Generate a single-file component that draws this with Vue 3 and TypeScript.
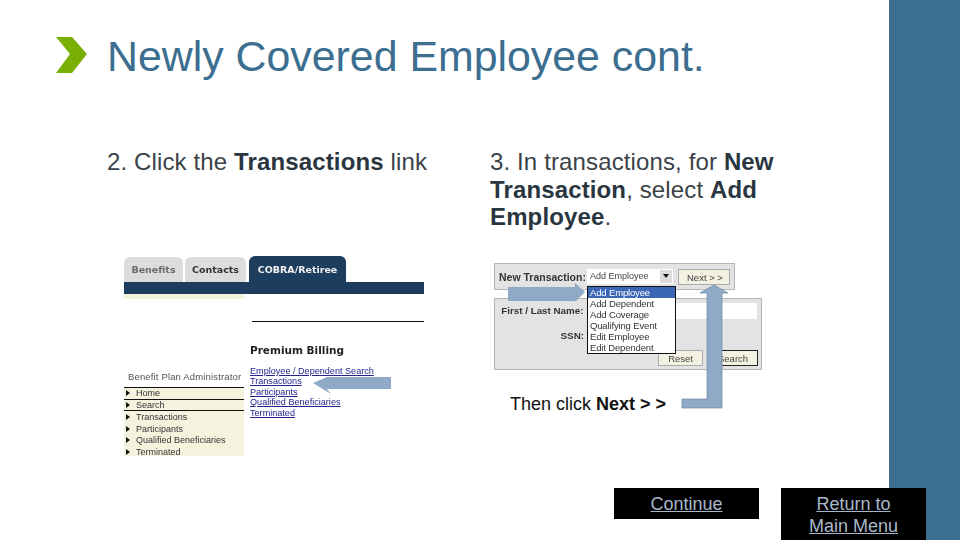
<script setup lang="ts">
const links: string[] = ['Employee / Dependent Search', 'Transactions', 'Participants', 'Qualified Beneficiaries', 'Terminated']
const menu: string[] = ['Home', 'Search', 'Transactions', 'Participants', 'Qualified Beneficiaries', 'Terminated']
const options: string[] = ['Add Employee', 'Add Dependent', 'Add Coverage', 'Qualifying Event', 'Edit Employee', 'Edit Dependent']
</script>

<template>
  <div class="slide">
    <aside class="rail"></aside>

    <header class="head">
      <svg class="chev" width="31" height="36" viewBox="0 0 31 36"><polygon points="0,0 16,0 31,17 16,36 0,36 14,17" fill="#7ab005" /></svg>
      <h1>Newly Covered Employee cont.</h1>
    </header>

    <main class="cols">
      <section class="col-left">
        <p class="lead">2. Click the <b>Transactions</b> link</p>
        <div class="shot-a">
          <div class="tabs">
            <span class="tab t1">Benefits</span>
            <span class="tab t2">Contacts</span>
            <span class="tab t3">COBRA/Retiree</span>
          </div>
          <div class="bar"></div>
          <div class="shot-body">
            <div class="nav">
              <div class="beige-top"></div>
              <div class="nav-title">Benefit Plan Administrator</div>
              <ul class="nav-list">
                <li v-for="m in menu" :key="m"><i></i>{{ m }}</li>
              </ul>
            </div>
            <div class="content">
              <div class="rule"></div>
              <div class="pb">Premium Billing</div>
              <a v-for="l in links" :key="l" class="lnk">{{ l }}</a>
            </div>
          </div>
          <svg class="arrow-a" width="78" height="24" viewBox="0 0 78 24"><polygon points="0,11 14,5 78,5 78,17 14,17 18,22" fill="#8fa9c6" /></svg>
        </div>
      </section>

      <section class="col-right">
        <p class="lead wide">3. In transactions, for <b>New Transaction</b>, select <b>Add Employee</b>.</p>
        <div class="shot-b">
          <div class="panel p1">
            <b class="lab">New Transaction:</b>
            <span class="select">Add Employee<span class="drop"></span></span>
            <span class="btn next">Next &gt; &gt;</span>
          </div>
          <div class="panel p2">
            <div class="row"><b class="lab2">First / Last Name:</b><span class="input"></span></div>
            <div class="row"><b class="lab2">SSN:</b></div>
            <div class="btns"><span class="btn">Reset</span><span class="btn strong">Search</span></div>
          </div>
          <ul class="list">
            <li v-for="(o, i) in options" :key="o" :class="{ on: i === 0 }">{{ o }}</li>
          </ul>
          <svg class="arrow-b" width="268" height="146" viewBox="0 0 268 146">
            <polygon points="14,24 81,24 81,20 91,29 81,39 81,38 14,38" fill="#8fa9c6" />
            <polygon points="220,22 234,30 228,30 228,145 188,145 188,136 213,136 213,30 206,30" fill="#8fa9c6" stroke="#6f86a3" stroke-width="0.7" />
          </svg>
        </div>
        <p class="then">Then click <b>Next &gt; &gt;</b></p>
      </section>
    </main>

    <footer class="foot">
      <a class="action short">Continue</a>
      <a class="action tall">Return to<br />Main Menu</a>
    </footer>
  </div>
</template>

<style>
html, body { margin: 0; background: #fff; }
</style>

<style scoped>
.slide {
  position: relative;
  width: 960px;
  height: 540px;
  overflow: hidden;
  background: #fff;
  font-family: "Liberation Sans", Arial, sans-serif;
}
.rail {
  position: absolute;
  top: 0;
  right: 0;
  width: 71px;
  height: 540px;
  background: #3b6e8f;
}
.head {
  position: relative;
  display: flex;
  align-items: center;
  height: 110px;
  padding-left: 56px;
  box-sizing: border-box;
}
.chev { flex: none; }
h1 {
  margin: 3px 0 0 20px;
  font-weight: 400;
  font-size: 42.85px;
  line-height: 1;
  color: #3b6e8f;
  white-space: nowrap;
}
.cols {
  position: relative;
  display: flex;
  height: 378px;
}
.col-left { width: 490px; padding-left: 107px; flex: none; box-sizing: border-box; }
.col-right { flex: 1; }
.lead {
  margin: 0;
  padding-top: 38px;
  box-sizing: border-box;
  font-size: 24px;
  line-height: 27.5px;
  letter-spacing: 0.13px;
  color: #3a4248;
  height: 83px;
  white-space: nowrap;
}
.lead b { color: #2a363f; }
.lead.wide { white-space: normal; width: 300px; height: 118px; }

.shot-a {
  position: relative;
  width: 300px;
  height: 200px;
  margin: 63px 0 0 17px;
  font-size: 9.5px;
  color: #222;
}
.shot-a > *, .shot-b > * { filter: blur(0.35px); }
.tabs { display: flex; align-items: flex-end; height: 26px; }
.tab {
  display: flex;
  align-items: center;
  justify-content: center;
  height: 25px;
  border-radius: 6px 6px 0 0;
  background: #dcdcdc;
  font-weight: 700;
  font-family: "DejaVu Sans", sans-serif;
  font-size: 9.5px;
  box-sizing: border-box;
  white-space: nowrap;
}
.t1 { width: 59px; color: #6a6a6a; }
.t2 { width: 61px; margin-left: 2px; color: #333; }
.t3 { width: 97px; height: 26px; margin-left: 3px; background: #1c3d5e; color: #f2f2f2; }
.bar { height: 12px; background: #1c3d5e; }
.shot-body { display: flex; height: 162px; }
.nav { width: 120px; display: flex; flex-direction: column; }
.beige-top { height: 5px; background: #f5f3de; }
.nav-title { margin-top: 73px; height: 15px; line-height: 10px; font-size: 9.5px; color: #555; white-space: nowrap; padding-left: 4px; letter-spacing: 0.15px; }
.nav-list {
  list-style: none;
  margin: 0;
  padding: 0;
  background: #f5f3de;
  flex: 1;
  overflow: hidden;
  border-top: 1px solid #111;
}
.nav-list li {
  display: flex;
  align-items: center;
  height: 11.6px;
  padding-left: 2px;
  font-size: 9px;
  color: #333;
  white-space: nowrap;
}
.nav-list li:nth-child(-n + 2) { border-bottom: 1px solid #111; box-sizing: border-box; }
.nav-list i {
  width: 0;
  height: 0;
  margin-right: 6px;
  border-left: 4px solid #111;
  border-top: 3.5px solid transparent;
  border-bottom: 3.5px solid transparent;
}
.content { flex: 1; display: flex; flex-direction: column; padding-left: 6px; }
.rule { margin: 27px 0 0 2px; height: 1px; background: #111; }
.pb { margin-top: 22px; height: 22px; font: 700 10.5px/12px "DejaVu Sans", sans-serif; color: #222; }
.lnk { display: block; height: 10.4px; line-height: 10.4px; font-size: 9.1px; color: #23238e; text-decoration: underline; white-space: nowrap; }
.arrow-a { position: absolute; left: 189px; top: 116px; }

.shot-b {
  position: relative;
  width: 268px;
  height: 107px;
  margin: 35px 0 0 4px;
  font-size: 10px;
  color: #222;
}
.panel { position: absolute; left: 0; background: #e3e3e3; border: 1px solid #b5b5b5; box-sizing: border-box; }
.p1 { top: 0; width: 241px; height: 27px; display: flex; align-items: center; padding-left: 4px; }
.lab { font-size: 10.5px; width: 88px; white-space: nowrap; color: #333; }
.select {
  position: relative;
  display: block;
  width: 86px;
  height: 15px;
  line-height: 15px;
  padding-left: 3px;
  box-sizing: border-box;
  background: #fff;
  font-size: 9px;
  color: #444;
}
.drop { position: absolute; right: 1px; top: 1px; width: 12px; height: 13px; background: #dcdcdc; }
.drop::after {
  content: "";
  position: absolute;
  left: 3px;
  top: 4px;
  border-top: 4px solid #111;
  border-left: 3px solid transparent;
  border-right: 3px solid transparent;
}
.btn {
  display: inline-block;
  padding: 0 9px;
  height: 16px;
  line-height: 15px;
  background: #f3f1e2;
  border: 1px solid #aaa;
  box-sizing: border-box;
  font-size: 9.5px;
  color: #444;
  white-space: nowrap;
}
.next { margin-left: 5px; width: 52px; padding: 0 8px; }
.p2 { top: 35px; width: 268px; height: 72px; padding: 3px 4px; }
.row { display: flex; align-items: center; height: 17px; margin-bottom: 8px; }
.lab2 { width: 85px; text-align: right; font-size: 9.8px; white-space: nowrap; color: #333; }
.input { margin-left: 90px; width: 84px; height: 16px; background: #fff; }
.btns { position: absolute; right: 3px; bottom: 3px; display: flex; gap: 5px; }
.strong { border: 1px solid #222; width: 50px; }
.list {
  position: absolute;
  left: 93px;
  top: 23px;
  width: 89px;
  height: 68px;
  margin: 0;
  padding: 0;
  list-style: none;
  background: #fff;
  border: 1px solid #111;
  box-sizing: border-box;
}
.list li { height: 11px; line-height: 11px; padding-left: 2px; font-size: 9.5px; letter-spacing: -0.15px; color: #333; white-space: nowrap; }
.list li.on { background: #3a66b5; color: #fff; }
.shot-b > .arrow-b { position: absolute; left: 0; top: 0; overflow: visible; filter: none; }
.then { margin: 24px 0 0 20px; font-size: 18px; line-height: 20px; color: #111; position: relative; }

.foot {
  position: absolute;
  top: 488px;
  right: 34px;
  display: flex;
  align-items: flex-start;
  gap: 22px;
}
.action {
  display: block;
  width: 145px;
  box-sizing: border-box;
  padding-top: 5px;
  background: #000;
  color: #a9b8c9;
  text-align: center;
  font-size: 18px;
  line-height: 22px;
  text-decoration: underline;
}
.short { height: 31px; }
.tall { height: 52px; }
</style>
